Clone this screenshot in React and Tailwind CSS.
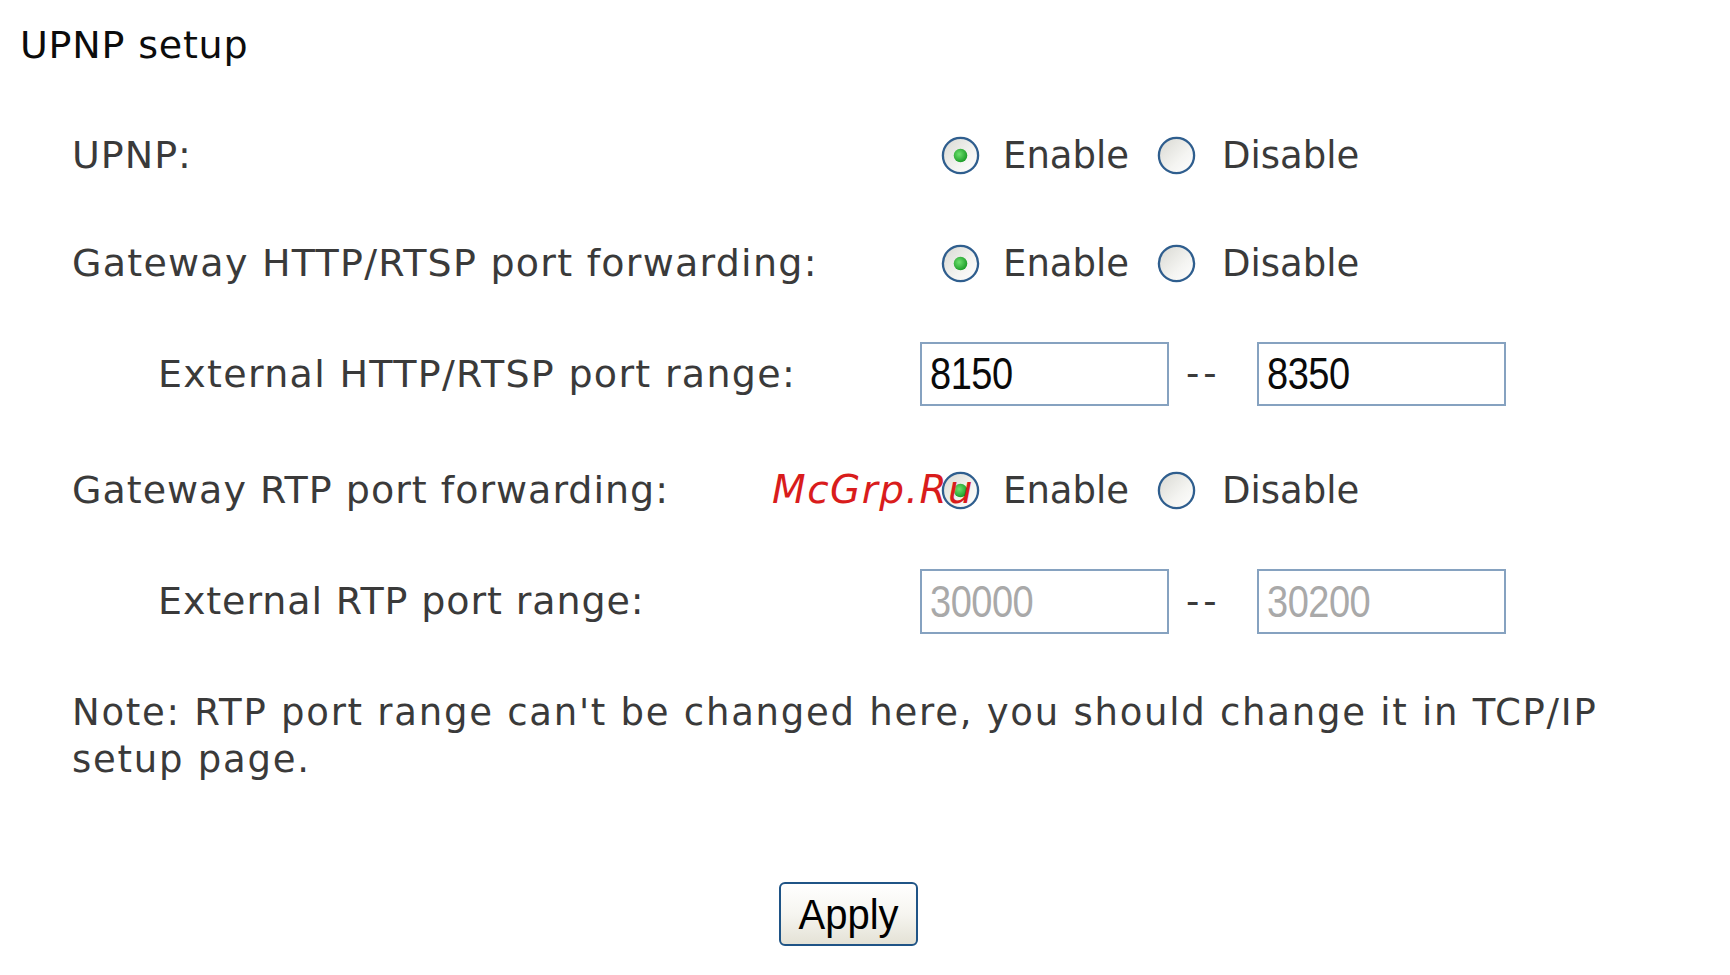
import React from "react";

function Radio({ checked, id }) {
  return (
    <svg width="39" height="39" viewBox="0 0 39 39" className="shrink-0">
      <defs>
        <linearGradient id={`rg-${id}`} x1="0" y1="0" x2="1" y2="1">
          <stop offset="0" stopColor="#d8d8d2" />
          <stop offset="0.6" stopColor="#f4f4f1" />
          <stop offset="1" stopColor="#ffffff" />
        </linearGradient>
        <radialGradient id={`dg-${id}`} cx="0.4" cy="0.4" r="0.6">
          <stop offset="0" stopColor="#6ee06e" />
          <stop offset="1" stopColor="#1e9e2a" />
        </radialGradient>
      </defs>
      <circle cx="19.5" cy="19.5" r="17.6" fill={`url(#rg-${id})`} stroke="#2f5e8e" strokeWidth="2.3" />
      {checked && <circle cx="19.5" cy="19.5" r="6.8" fill={`url(#dg-${id})`} />}
    </svg>
  );
}

function RadioGroup({ id, value = "enable" }) {
  return (
    <div className="flex items-center pl-[21px]">
      <Radio checked={value === "enable"} id={`${id}-e`} />
      <span className="ml-[23px] text-[37px] leading-none">Enable</span>
      <div className="ml-[28px]">
        <Radio checked={value === "disable"} id={`${id}-d`} />
      </div>
      <span className="ml-[26px] text-[37px] leading-none">Disable</span>
    </div>
  );
}

function PortInput({ value, disabled }) {
  return (
    <div
      className={
        "w-[249px] h-full border-2 border-[#86a2c0] bg-white pl-[8px] flex items-center font-['Liberation_Sans',Arial,sans-serif] " +
        (disabled ? "text-[#a9a9a9]" : "text-[#0a0a0a]")
      }
    >
      <span className="inline-block text-[38px] leading-none tracking-[-0.5px] scale-y-[1.18]">{value}</span>
    </div>
  );
}

function Range({ from, to, disabled }) {
  return (
    <div className="flex items-center h-full">
      <PortInput value={from} disabled={disabled} />
      <div className="w-[88px] pl-[17px] text-[37px] tracking-[4px] text-[#3b3b3b]">--</div>
      <PortInput value={to} disabled={disabled} />
    </div>
  );
}

export default function App() {
  return (
    <div className="w-[1730px] h-[975px] bg-white text-[#3a3a3a] font-['DejaVu_Sans',Verdana,sans-serif] overflow-hidden">
      <div className="h-[91px] flex items-center pl-[20px] text-[38px] tracking-[0.8px] text-[#0c0c0c]">
        UPNP setup
      </div>

      <div className="pl-[72px] flex flex-col">
        <div className="mt-[34px] h-[60px] flex items-center">
          <div className="w-[848px] text-[38px] tracking-[1px]">UPNP:</div>
          <RadioGroup id="upnp" />
        </div>

        <div className="mt-[48px] h-[60px] flex items-center">
          <div className="w-[848px] text-[38px] tracking-[1.25px]">Gateway HTTP/RTSP port forwarding:</div>
          <RadioGroup id="http" />
        </div>

        <div className="mt-[49px] h-[64px] flex items-center">
          <div className="w-[848px] pl-[86px] text-[38px] tracking-[1.3px]">External HTTP/RTSP port range:</div>
          <Range from="8150" to="8350" />
        </div>

        <div className="relative mt-[54px] h-[60px] flex items-center">
          <div className="w-[848px] text-[38px] tracking-[1px]">Gateway RTP port forwarding:</div>
          <RadioGroup id="rtp" />
          <div className="absolute left-[700px] top-[1px] text-[39px] italic tracking-[1.5px] text-[#d91c1c] font-['DejaVu_Sans',sans-serif]">
            McGrp.Ru
          </div>
        </div>

        <div className="mt-[49px] h-[65px] flex items-center">
          <div className="w-[848px] pl-[86px] text-[38px] tracking-[0.9px]">External RTP port range:</div>
          <Range from="30000" to="30200" disabled />
        </div>

        <p className="mt-[55px] w-[1560px] text-[37px] leading-[47px] tracking-[1.75px]">
          Note: RTP port range can't be changed here, you should change it in TCP/IP setup page.
        </p>
      </div>

      <div className="mt-[99px] w-[1697px] flex justify-center">
        <button className="w-[139px] h-[64px] border-2 border-[#1f5486] rounded-[6px] bg-gradient-to-b from-white via-[#f6f5f0] to-[#e4e2d6] text-[40px] leading-none text-black font-['Liberation_Sans',Arial,sans-serif]">
          <span className="inline-block scale-y-[1.08]">Apply</span>
        </button>
      </div>
    </div>
  );
}
